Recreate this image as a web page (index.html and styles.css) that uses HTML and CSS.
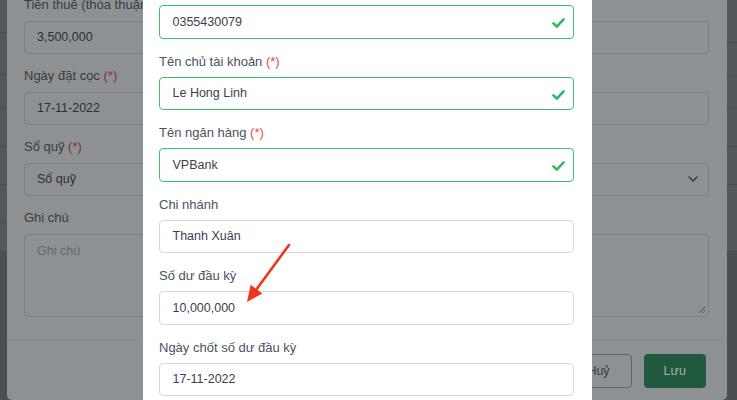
FILE: index.html
```html
<!DOCTYPE html>
<html lang="vi">
<head>
<meta charset="utf-8">
<title>Thêm tài khoản</title>
<link rel="stylesheet" href="styles.css">
</head>
<body>
<div class="page">
  <div class="strip strip-left">
    <div class="prow" style="height:33px"></div>
    <div class="prow" style="height:42px"></div>
    <div class="prow" style="height:34px"></div>
    <div class="prow" style="height:38px"></div>
    <div class="prow" style="height:38px"></div>
    <div class="prow" style="height:38px"></div>
    <div class="prow" style="height:29px"></div>
  </div>
  <div class="page-mid"></div>
  <div class="strip strip-right">
    <div class="prow" style="height:43px"></div>
    <div class="prow" style="height:33px"></div>
    <div class="prow" style="height:33px"></div>
    <div class="prow" style="height:38px"></div>
    <div class="prow" style="height:38px"></div>
    <div class="prow" style="height:67px"></div>
  </div>
</div>

<div class="dlg-back">
  <div class="back-body">
    <div class="row2">
      <div class="field">
        <div class="blabel">Tiền thuê (thỏa thuận) <span class="req">(*)</span></div>
        <div class="binput">3,500,000</div>
      </div>
      <div class="field">
        <div class="blabel">Tiền cọc <span class="req">(*)</span></div>
        <div class="binput"></div>
      </div>
    </div>
    <div class="row2">
      <div class="field">
        <div class="blabel">Ngày đặt cọc <span class="req">(*)</span></div>
        <div class="binput">17-11-2022</div>
      </div>
      <div class="field">
        <div class="blabel">Ngày bắt đầu <span class="req">(*)</span></div>
        <div class="binput"></div>
      </div>
    </div>
    <div class="field">
      <div class="blabel">Sổ quỹ <span class="req">(*)</span></div>
      <div class="binput bselect">
        <span>Sổ quỹ</span>
        <svg class="chev" width="10" height="6" viewBox="0 0 10 6"><polyline points="1,1 5,5 9,1" fill="none" stroke="#34373b" stroke-width="1.4" stroke-linecap="round" stroke-linejoin="round"/></svg>
      </div>
    </div>
    <div class="field">
      <div class="blabel">Ghi chú</div>
      <div class="binput barea">
        <span class="ph">Ghi chú</span>
        <svg class="grip" width="8" height="8" viewBox="0 0 8 8"><line x1="1" y1="7" x2="7" y2="1" stroke="#3e4146" stroke-width="0.9"/><line x1="4.5" y1="7" x2="7" y2="4.5" stroke="#3e4146" stroke-width="0.9"/></svg>
      </div>
    </div>
  </div>
  <div class="back-foot">
    <div class="bbtn bbtn-cancel">Huỷ</div>
    <div class="bbtn bbtn-save">Lưu</div>
  </div>
</div>

<div class="dlg-front">
  <div class="field">
    <div class="finput valid">
      <span>0355430079</span>
      <svg class="check" width="13" height="10" viewBox="0 0 13 10"><polyline points="1.4,5.4 4.8,8.6 11.6,1.4" fill="none" stroke="#2fb760" stroke-width="2.5" stroke-linecap="round" stroke-linejoin="round"/></svg>
    </div>
  </div>
  <div class="field">
    <div class="flabel">Tên chủ tài khoản <span class="req">(*)</span></div>
    <div class="finput valid">
      <span>Le Hong Linh</span>
      <svg class="check" width="13" height="10" viewBox="0 0 13 10"><polyline points="1.4,5.4 4.8,8.6 11.6,1.4" fill="none" stroke="#2fb760" stroke-width="2.5" stroke-linecap="round" stroke-linejoin="round"/></svg>
    </div>
  </div>
  <div class="field">
    <div class="flabel">Tên ngân hàng <span class="req">(*)</span></div>
    <div class="finput valid">
      <span>VPBank</span>
      <svg class="check" width="13" height="10" viewBox="0 0 13 10"><polyline points="1.4,5.4 4.8,8.6 11.6,1.4" fill="none" stroke="#2fb760" stroke-width="2.5" stroke-linecap="round" stroke-linejoin="round"/></svg>
    </div>
  </div>
  <div class="field">
    <div class="flabel">Chi nhánh</div>
    <div class="finput"><span>Thanh Xuân</span></div>
  </div>
  <div class="field">
    <div class="flabel">Số dư đầu kỳ</div>
    <div class="finput"><span>10,000,000</span></div>
  </div>
  <div class="field">
    <div class="flabel">Ngày chốt số dư đầu kỳ</div>
    <div class="finput"><span>17-11-2022</span></div>
  </div>
</div>

<svg class="arrow" width="60" height="70" viewBox="240 240 60 70">
  <line x1="289" y1="245" x2="256" y2="290" stroke="#f2361d" stroke-width="2.6" stroke-linecap="round"/>
  <polygon points="247,302 262.3,293.4 250.7,284.8" fill="#f2361d"/>
</svg>
</body>
</html>
```

FILE: styles.css
```css
* {
  box-sizing: border-box;
}

html, body {
  margin: 0;
  padding: 0;
  width: 737px;
  height: 400px;
  overflow: hidden;
}

body {
  font-family: "Liberation Sans", Arial, Helvetica, sans-serif;
  background: #4b4f54;
  position: relative;
}

/* underlying page (dimmed twice) */
.page {
  display: flex;
  height: 400px;
}

.strip {
  display: flex;
  flex-direction: column;
  background: #4b4f54;
}

.strip-left {
  width: 7px;
}

.strip-right {
  width: 10px;
}

.page-mid {
  flex: 1;
}

.prow {
  background: #53575c;
  border-bottom: 1px solid #484c51;
}

/* first (back) dialog, dimmed by the second backdrop */
.dlg-back {
  position: absolute;
  left: 7px;
  top: -4px;
  width: 720px;
  height: 404px;
  overflow: hidden;
  background: #8e9194;
  border-radius: 5px;
  display: flex;
  flex-direction: column;
}

.back-body {
  padding: 0 18px 22.5px 17px;
  display: flex;
  flex-direction: column;
  gap: 13px;
}

.row2 {
  display: grid;
  grid-template-columns: 1fr 1fr;
  column-gap: 16px;
}

.field {
  display: flex;
  flex-direction: column;
  gap: 6.5px;
}

.blabel {
  font-size: 13px;
  line-height: 18px;
  color: #393c41;
  white-space: nowrap;
}

.req {
  color: #8f2d31;
}

.binput {
  height: 33.5px;
  border: 1px solid #7b7f84;
  border-radius: 4px;
  padding: 0 12px;
  display: flex;
  align-items: center;
  font-size: 12.5px;
  color: #2d3035;
  white-space: nowrap;
}

.bselect {
  justify-content: space-between;
  padding-right: 10px;
}

.chev {
  display: block;
}

.barea {
  height: 83px;
  align-items: flex-start;
  padding-top: 9px;
  position: relative;
}

.ph {
  color: #64686d;
}

.grip {
  position: absolute;
  right: 2px;
  bottom: 2px;
}

.back-foot {
  border-top: 1px solid #84878b;
  padding: 14px 21px 0 0;
  display: flex;
  justify-content: flex-end;
  gap: 12px;
}

.bbtn {
  height: 34px;
  border-radius: 4px;
  display: flex;
  align-items: center;
  justify-content: center;
  font-size: 12.5px;
}

.bbtn-cancel {
  width: 66px;
  border: 1px solid #5f6368;
  color: #36393d;
}

.bbtn-save {
  width: 62.5px;
  background: #1f5a3e;
  color: #a7b1ad;
}

/* front dialog */
.dlg-front {
  position: absolute;
  left: 143px;
  top: 0;
  width: 449px;
  height: 400px;
  overflow: hidden;
  background: #ffffff;
  padding: 5px 18px 0 16px;
  display: flex;
  flex-direction: column;
  gap: 14px;
}

.flabel {
  font-size: 13px;
  line-height: 18px;
  color: #4d5161;
  white-space: nowrap;
}

.dlg-front .field {
  gap: 6px;
  flex-shrink: 0;
}

.dlg-front .req {
  color: #e5484d;
}

.finput {
  height: 33.5px;
  border: 1px solid #d6d8de;
  border-radius: 4px;
  padding: 0 8px 0 12.5px;
  display: flex;
  align-items: center;
  justify-content: space-between;
  font-size: 12.5px;
  color: #3b3f4d;
}

.finput.valid {
  border-color: #3cc46e;
}

.check {
  display: block;
  margin-top: 3px;
}

/* annotation arrow */
.arrow {
  position: absolute;
  left: 240px;
  top: 240px;
}
```
